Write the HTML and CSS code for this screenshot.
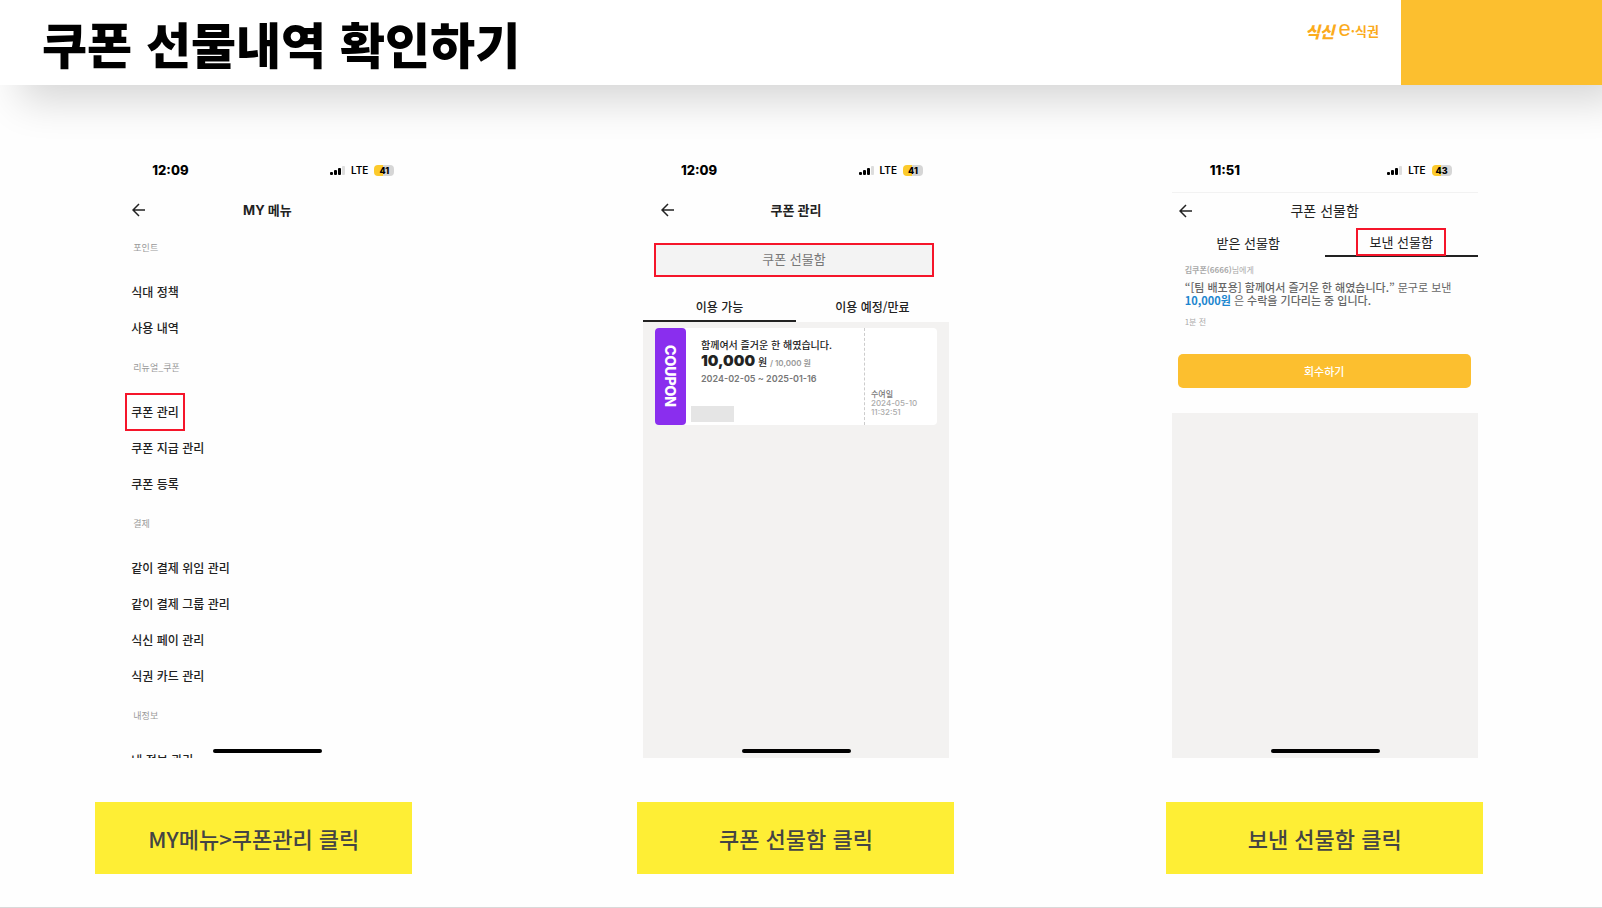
FILE: index.html
```
<!DOCTYPE html>
<html lang="ko">
<head>
    <meta charset="UTF-8">
    <title>쿠폰 선물내역 확인하기</title>
    <link rel="stylesheet" href="styles.css">
</head>
<body>
    <header class="header">
        <h1>쿠폰 선물내역 확인하기</h1>
        <div class="logo"><b>식신</b><i>e</i><span>·식권</span></div>
        <div class="block"></div>
    </header>

    <main class="steps">
        <!-- 1. MY 메뉴 -->
        <section class="step first">
            <div class="phone">
                <div class="status">
                    <span class="time">12:09</span>
                    <svg class="signal" width="15" height="9" viewBox="0 0 15 9"><rect x="0" y="6" width="3" height="3" rx="1"/><rect x="4" y="4" width="3" height="5" rx="1"/><rect x="8" y="2" width="3" height="7" rx="1"/><rect class="off" x="12" y="0" width="3" height="9" rx="1"/></svg>
                    <span class="lte">LTE</span>
                    <span class="battery">41</span>
                </div>
                <div class="bar">
                    <button class="back" aria-label="뒤로"><svg width="14" height="14" viewBox="0 0 14 14"><path d="M13 7H1M7 1L1 7l6 6"/></svg></button>
                    <h2>MY 메뉴</h2>
                </div>
                <nav class="menu">
                    <h3>포인트</h3>
                    <a href="#">식대 정책</a>
                    <a href="#">사용 내역</a>
                    <h3>리뉴얼_쿠폰</h3>
                    <a href="#" class="mark">쿠폰 관리</a>
                    <a href="#">쿠폰 지급 관리</a>
                    <a href="#">쿠폰 등록</a>
                    <h3>결제</h3>
                    <a href="#">같이 결제 위임 관리</a>
                    <a href="#">같이 결제 그룹 관리</a>
                    <a href="#">식신 페이 관리</a>
                    <a href="#">식권 카드 관리</a>
                    <h3>내정보</h3>
                    <a href="#">내 정보 관리</a>
                </nav>
                <div class="home"></div>
            </div>
            <p class="caption">MY메뉴&gt;쿠폰관리 클릭</p>
        </section>

        <!-- 2. 쿠폰 관리 -->
        <section class="step">
            <div class="phone">
                <div class="status">
                    <span class="time">12:09</span>
                    <svg class="signal" width="15" height="9" viewBox="0 0 15 9"><rect x="0" y="6" width="3" height="3" rx="1"/><rect x="4" y="4" width="3" height="5" rx="1"/><rect x="8" y="2" width="3" height="7" rx="1"/><rect class="off" x="12" y="0" width="3" height="9" rx="1"/></svg>
                    <span class="lte">LTE</span>
                    <span class="battery">41</span>
                </div>
                <div class="bar">
                    <button class="back" aria-label="뒤로"><svg width="14" height="14" viewBox="0 0 14 14"><path d="M13 7H1M7 1L1 7l6 6"/></svg></button>
                    <h2>쿠폰 관리</h2>
                </div>
                <button class="giftbox">쿠폰 선물함</button>
                <div class="tabs">
                    <button class="on">이용 가능</button>
                    <button>이용 예정/만료</button>
                </div>
                <div class="list">
                    <article class="coupon">
                        <div class="side">COUPON</div>
                        <div class="info">
                            <p class="name">함께여서 즐거운 한 해였습니다.</p>
                            <p class="price"><b>10,000</b> <span>원</span> <small>/ 10,000 원</small></p>
                            <p class="date">2024-02-05 ~ 2025-01-16</p>
                            <div class="blank"></div>
                        </div>
                        <div class="given">
                            <b>수여일</b>
                            <span>2024-05-10</span>
                            <span>11:32:51</span>
                        </div>
                    </article>
                </div>
                <div class="home"></div>
            </div>
            <p class="caption">쿠폰 선물함 클릭</p>
        </section>

        <!-- 3. 쿠폰 선물함 -->
        <section class="step">
            <div class="phone">
                <div class="status">
                    <span class="time">11:51</span>
                    <svg class="signal" width="15" height="9" viewBox="0 0 15 9"><rect x="0" y="6" width="3" height="3" rx="1"/><rect x="4" y="4" width="3" height="5" rx="1"/><rect x="8" y="2" width="3" height="7" rx="1"/><rect class="off" x="12" y="0" width="3" height="9" rx="1"/></svg>
                    <span class="lte">LTE</span>
                    <span class="battery">43</span>
                </div>
                <div class="bar gift">
                    <button class="back" aria-label="뒤로"><svg width="14" height="14" viewBox="0 0 14 14"><path d="M13 7H1M7 1L1 7l6 6"/></svg></button>
                    <h2>쿠폰 선물함</h2>
                </div>
                <div class="tabs gift">
                    <button>받은 선물함</button>
                    <button class="on"><span class="mark">보낸 선물함</span></button>
                </div>
                <div class="message">
                    <p class="to"><b>김쿠폰(6666)</b>님에게</p>
                    <p class="text"><b>“[팀 배포용] 함께여서 즐거운 한 해였습니다.”</b> 문구로 보낸<br><b class="won">10,000원</b> 은 <b>수락을 기다리는 중 입니다.</b></p>
                    <p class="ago">1분 전</p>
                </div>
                <button class="recall">회수하기</button>
                <div class="list"></div>
                <div class="home"></div>
            </div>
            <p class="caption">보낸 선물함 클릭</p>
        </section>
    </main>
</body>
</html>
```
FILE: styles.css
```
*{
    margin: 0;
    padding: 0;
    box-sizing: border-box;
}
body{
    min-height: 100vh;
    background: #fefefe;
    border-bottom: 1px solid #d9d9d9;
    font-family: "Noto Sans CJK KR", sans-serif;
    color: #222;
    overflow-x: hidden;
}
button{
    border: 0;
    background: none;
    font-family: inherit;
    color: inherit;
}
a{
    color: inherit;
    text-decoration: none;
}

/* 상단 */
.header{
    display: flex;
    align-items: center;
    height: 85px;
    background: #fff;
    box-shadow: 20px 16px 40px rgba(0,0,0,.16);
}
.header h1{
    flex: 1;
    padding-left: 42px;
    font-size: 49px;
    line-height: 72px;
    font-weight: 900;
    color: #000;
}
.logo{
    display: flex;
    align-items: center;
    height: 24px;
    margin-right: 22px;
    margin-bottom: 24px;
    color: #fbab1c;
}
.logo b{
    font-size: 16px;
    font-weight: 900;
    font-style: italic;
}
.logo i{
    margin-left: 4px;
    font: 22px/20px "Liberation Sans", sans-serif;
    margin-bottom: 3px;
}
.logo span{
    font-size: 13px;
    font-weight: bold;
}
.block{
    width: 201px;
    height: 100%;
    background: #fcbf2f;
}

.steps{
    display: grid;
    grid-template-columns: repeat(3,1fr);
    padding: 65px 13px 33px 3px;
}
.step{
    display: flex;
    flex-direction: column;
    align-items: center;
}
.phone{
    position: relative;
    display: flex;
    flex-direction: column;
    width: 306px;
    height: 608px;
    overflow: hidden;
}
.caption{
    width: 317px;
    margin-top: 44px;
    background: #feee35;
    font-size: 22px;
    line-height: 72px;
    font-weight: 500;
    text-align: center;
    color: #444;
}
.first .caption{
    margin-right: 27px;
}

/* 상태바 */
.status{
    display: flex;
    align-items: center;
    height: 40px;
    padding: 0 26px 0 38px;
    flex: none;
    font-family: Inter, sans-serif;
    color: #000;
}
.time{
    flex: 1;
    font-size: 13px;
    line-height: 16px;
    font-weight: 800;
}
.signal .off{
    fill: #ddd;
}
.lte{
    margin: 0 6px;
    font-size: 10px;
    font-weight: 600;
}
.battery{
    width: 20px;
    border-radius: 4px;
    background: linear-gradient(90deg,#fcca2c 45%,#d6d6d6 45%);
    font-size: 9px;
    line-height: 11px;
    font-weight: 800;
    text-align: center;
}
.home{
    position: absolute; /*화면 내용 위에 떠 있는 홈 바*/
    left: 50%;
    bottom: 5px;
    width: 109px;
    height: 4px;
    margin-left: -54px;
    border-radius: 2px;
    background: #000;
}

/* 제목줄 */
.bar{
    display: grid;
    grid-template-columns: 30px 1fr 30px;
    align-items: center;
    height: 32px;
    margin-top: 4px;
    padding: 0 4px 0 18px;
    flex: none;
}
.bar h2{
    font: bold 13px/20px Inter, "Noto Sans CJK KR", sans-serif;
    text-align: center;
    padding-right: 14px;
}
.back{
    height: 14px;
    text-align: left;
}
.back svg{
    display: block;
    fill: none;
    stroke: #222;
    stroke-width: 1.5;
}
.bar.gift{
    height: 37px;
    margin-top: 2px;
    padding: 0 7px;
    border-top: 1px solid #f2f2f2;
}
.bar.gift h2{
    font-size: 14px;
    font-weight: normal;
    padding-right: 0;
}

/* 메뉴 */
.menu{
    display: flex;
    flex-direction: column;
    align-items: flex-start;
    padding-left: 12px;
}
.menu h3{
    padding: 12px 7px 16px;
    font-size: 9px;
    line-height: 20px;
    font-weight: normal;
    color: #999;
}
.menu a{
    padding: 0 5px;
    font-size: 12px;
    line-height: 36px;
    font-weight: 500;
}
.mark{
    outline: 2px solid #f5152a;
    outline-offset: -1px;
}

.giftbox{
    height: 34px;
    margin: 17px 15px 0 11px;
    padding-bottom: 3px;
    flex: none;
    border: 2px solid #f5152a;
    background: #f3f3f3;
    font-size: 13px;
    color: #777;
}

/* 탭 */
.tabs{
    display: flex;
    height: 30px;
    margin-top: 15px;
    flex: none;
}
.tabs button{
    flex: 1;
    border-bottom: 2px solid transparent;
    font-size: 12px;
    font-weight: 500;
}
.tabs .on{
    border-color: #222;
}
.tabs.gift{
    height: 28px;
    margin-top: 0;
}
.tabs.gift button{
    font-size: 13px;
    font-weight: normal;
}
.tabs .mark{
    display: inline-block;
    padding: 0 12px;
    line-height: 26px;
}

.list{
    flex: 1;
    padding: 6px 12px;
    background: #f3f2f1;
}

/* 쿠폰 */
.coupon{
    display: flex;
    height: 97px;
    border-radius: 4px;
    background: #fff;
}
.side{
    width: 31px;
    border-radius: 4px;
    background: #8a2eee;
    writing-mode: vertical-rl;
    font: 800 14px/31px Inter, sans-serif;
    text-align: center;
    color: #fff;
}
.info{
    flex: 1;
    padding: 9px 0 0 15px;
}
.name{
    font-size: 10px;
    line-height: 16px;
    font-weight: 500;
}
.price{
    font-size: 10px;
    line-height: 16px;
    font-weight: 500;
}
.price b{
    font: 900 15px/16px Inter, sans-serif;
}
.price small{
    font: 600 8px/16px Inter, "Noto Sans CJK KR", sans-serif;
    color: #999;
}
.date{
    font: 600 9px/16px Inter, sans-serif;
    color: #777;
}
.blank{
    width: 43px;
    height: 16px;
    margin: 19px 0 0 -10px;
    background: #e5e5e5;
}
.given{
    display: flex;
    flex-direction: column;
    justify-content: flex-end;
    width: 73px;
    padding: 0 0 8px 6px;
    border-left: 1px dashed #ccc;
    font: 500 8px/9px Inter, "Noto Sans CJK KR", sans-serif;
    color: #aaa;
}
.given b{
    color: #777;
    font-weight: 500;
}

/* 선물 메시지 */
.message{
    padding: 7px 13px 0;
    color: #666;
}
.to,.ago{
    font-size: 8px;
    line-height: 12px;
    color: #aaa;
}
.text{
    margin: 5px 0 9px;
    font-size: 11px;
    line-height: 13px;
    white-space: nowrap;
}
.text b{
    font-weight: 500;
}
.text .won{
    font-weight: bold;
    color: #1c86cf;
}
.recall{
    height: 34px;
    margin: 26px 7px 25px 6px;
    flex: none;
    border-radius: 5px;
    background: #fcbf2f;
    font-size: 11px;
    font-weight: 500;
    color: #fff;
}
```
